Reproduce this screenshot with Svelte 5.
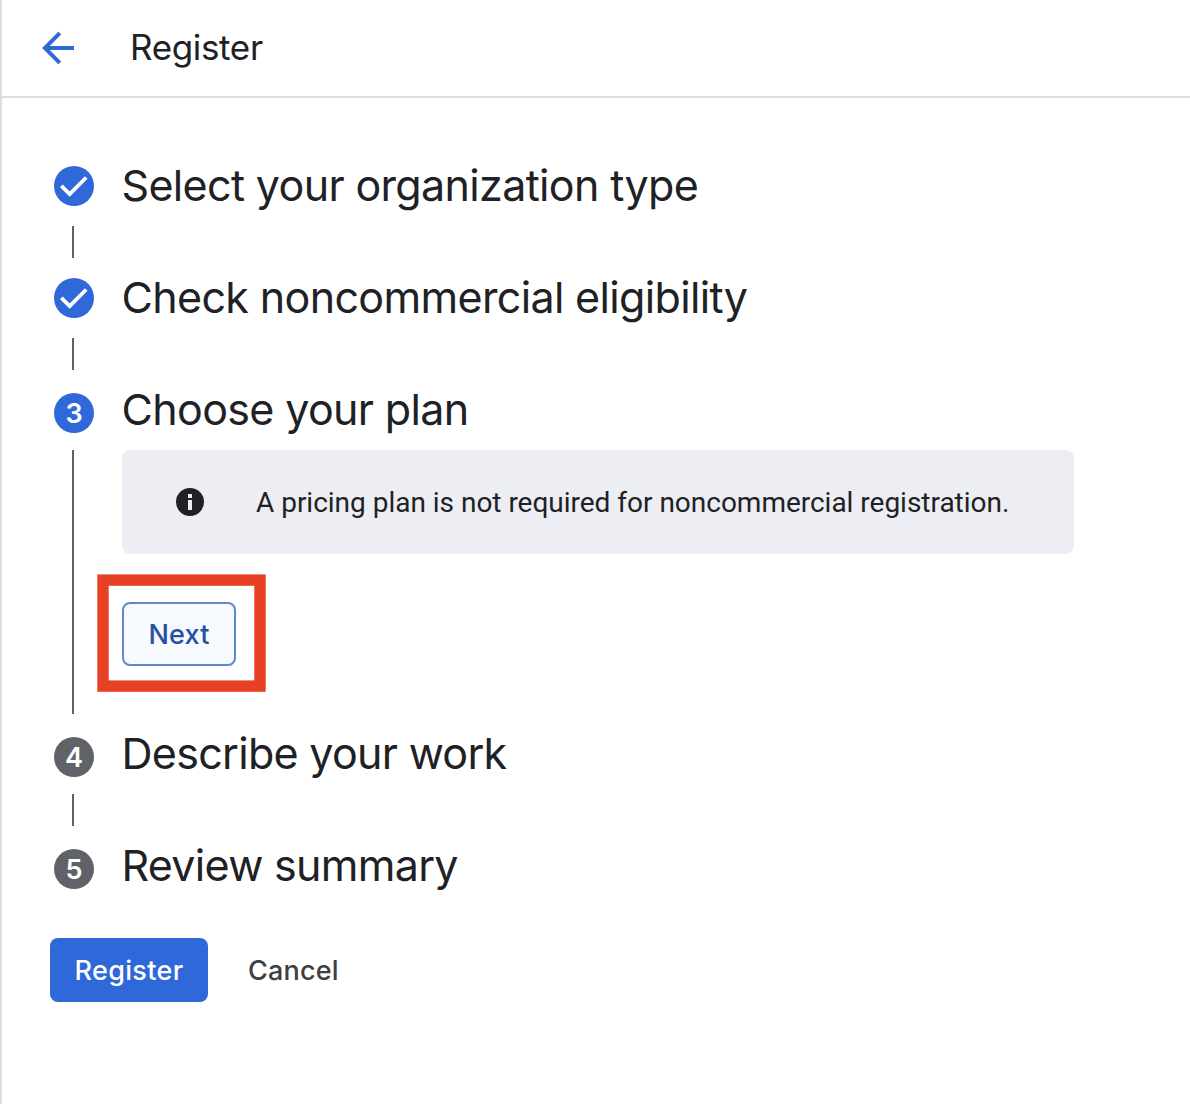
<script>
  const steps = [
    { key: 'organization', title: 'Select your organization type', state: 'done' },
    { key: 'eligibility', title: 'Check noncommercial eligibility', state: 'done' },
    { key: 'plan', title: 'Choose your plan', state: 'active' },
    { key: 'work', title: 'Describe your work', state: 'pending' },
    { key: 'summary', title: 'Review summary', state: 'pending' }
  ];
</script>

<div class="page">
  <header>
    <button class="back" aria-label="Back">
      <svg width="34" height="34" viewBox="0 0 34 34">
        <path d="M34 17H5M19.7 2.2L4.9 17l14.8 14.8" fill="none" stroke="#2f69d9" stroke-width="4" />
      </svg>
    </button>
    <h1>Register</h1>
  </header>

  <main>
    <ol>
      {#each steps as step, i}
        <li>
          <div class="row">
            <span class="badge {step.state}">
              {#if step.state === 'done'}
                <svg width="40" height="40" viewBox="0 0 40 40">
                  <path d="M7.3 19.8L15.7 28L32.2 11.5" fill="none" stroke="#fff" stroke-width="3.8" />
                </svg>
              {:else}{i + 1}{/if}
            </span>
            <h2 class={step.key}>{step.title}</h2>
          </div>
          {#if i < steps.length - 1}
            <div class="body" class:open={step.state === 'active'}>
              {#if step.state === 'active'}
                <div class="info">
                  <svg width="28" height="28" viewBox="0 0 28 28">
                    <circle cx="14" cy="14" r="14" fill="#202124" />
                    <path d="M12 6h4v4h-4zM12 12h4v10h-4z" fill="#edeef3" />
                  </svg>
                  <p>A pricing plan is not required for noncommercial registration.</p>
                </div>
                <div class="next-wrap">
                  <button class="next"><span>Next</span></button>
                  <svg class="highlight" width="170" height="119" viewBox="0 0 170 119">
                    <rect x="6" y="6.1" width="157" height="106" fill="none" stroke="#e84025" stroke-width="11.4" />
                  </svg>
                </div>
              {/if}
            </div>
          {/if}
        </li>
      {/each}
    </ol>
    <div class="actions">
      <button class="register"><span>Register</span></button>
      <button class="cancel"><span>Cancel</span></button>
    </div>
  </main>
</div>

<style>
  :global(body) { margin: 0; background: #fff; }
  * { box-sizing: border-box; }
  .page {
    height: 1104px;
    border-left: 2px solid #dadce0;
    color: #202124;
    font-family: Inter, Lato, sans-serif;
    overflow: hidden;
  }
  button { border: 0; padding: 0; background: none; font: inherit; color: inherit; white-space: nowrap; }
  header {
    display: flex;
    align-items: center;
    height: 98px;
    padding-left: 38px;
    border-bottom: 2px solid #dadce0;
  }
  .back { display: flex; width: 90px; }
  h1 { margin: 0 0 2px; font-size: 35px; font-weight: 400; line-height: 48px; letter-spacing: -0.35px; white-space: nowrap; }
  main { padding: 48px 0 0 48px; }
  ol { margin: 0; padding: 0; list-style: none; }
  .row { display: flex; align-items: center; height: 80px; padding-left: 4px; }
  .badge {
    display: flex;
    align-items: center;
    justify-content: center;
    flex: none;
    width: 40px;
    height: 40px;
    margin-right: 28px;
    border-radius: 50%;
    background: #5f6368;
    color: #fff;
    font-size: 27px;
    font-weight: 600;
    line-height: 40px;
  }
  .badge.done, .badge.active { background: #2f69d9; }
  .badge.active, .badge.pending { margin-top: 6px; padding-top: 2px; }
  h2 { margin: 0 0 0 -0.5px; padding-bottom: 2px; font-size: 43px; font-weight: 400; line-height: 60px; letter-spacing: -0.65px; white-space: nowrap; }
  h2.work, h2.summary { letter-spacing: -0.7px; }
  .body { height: 32px; margin-left: 22px; border-left: 2px solid #5f6368; }
  .body.open { height: 264px; padding-left: 48px; }
  .info {
    display: flex;
    align-items: center;
    width: 952px;
    height: 104px;
    padding-left: 54px;
    gap: 52px;
    border-radius: 8px;
    background: #edeef3;
  }
  .info p { margin: 2px 0 0; font-family: Roboto, sans-serif; font-size: 28px; line-height: 40px; letter-spacing: -0.015px; white-space: nowrap; }
  .next-wrap { position: relative; width: 114px; height: 64px; margin-top: 48px; }
  .next {
    width: 114px;
    height: 64px;
    border: 2px solid #6387c9;
    border-radius: 8px;
    background: #f6f9fe;
    color: #264fa0;
    font-size: 27px;
    font-weight: 500;
    letter-spacing: 0.2px;
  }
  .highlight { position: absolute; left: -25px; top: -28px; }
  .actions { display: flex; align-items: center; gap: 40px; margin-top: 32px; font-size: 27px; font-weight: 500; }
  .register { width: 158px; height: 64px; border-radius: 8px; background: #2f69d9; color: #fff; letter-spacing: 0.35px; }
  .cancel { height: 64px; color: #3c4043; letter-spacing: 0.2px; }
</style>
